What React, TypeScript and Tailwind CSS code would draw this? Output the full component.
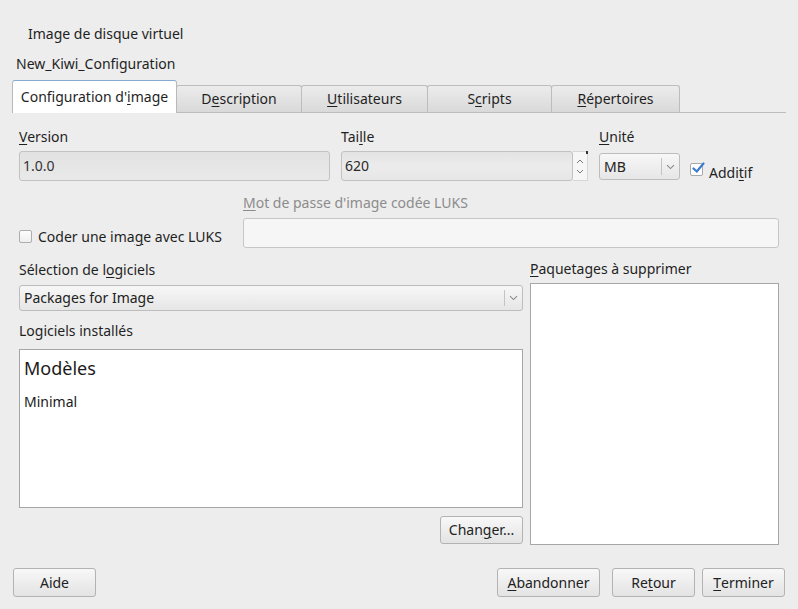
import type { ReactNode } from "react";

const font = { fontFamily: '"Noto Sans", "Open Sans", sans-serif' };

function U({ children }: { children: ReactNode }) {
  return <span className="underline underline-offset-2 decoration-1">{children}</span>;
}

function Button({ children, className = "" }: { children: ReactNode; className?: string }) {
  return (
    <button
      type="button"
      className={`flex items-center justify-center rounded-[3px] border border-[#b3b3b3] bg-linear-to-b from-[#f8f8f8] to-[#e3e3e3] text-[14px] text-[#222] ${className}`}
    >
      {children}
    </button>
  );
}

function Chevron() {
  return (
    <svg width="9" height="6" viewBox="0 0 9 6" className="text-[#8a8a8a]">
      <path d="M1 1.2 L4.5 4.6 L8 1.2" fill="none" stroke="currentColor" strokeWidth="1.1" />
    </svg>
  );
}

function Combo({ value, className = "" }: { value: string; className?: string }) {
  return (
    <div
      className={`flex items-center rounded-[3px] border border-[#bdbdbd] bg-linear-to-b from-[#f7f7f7] to-[#e6e6e6] ${className}`}
    >
      <span className="flex-1 pl-[4px] text-[#222]">{value}</span>
      <span className="h-[70%] w-px bg-[#c4c4c4]" />
      <span className="flex w-[17px] justify-center">
        <Chevron />
      </span>
    </div>
  );
}

function Tab({ children, width, active }: { children: ReactNode; width: string; active?: boolean }) {
  if (active) {
    return (
      <div
        className={`${width} relative z-10 -mb-px flex h-[33px] items-center justify-center rounded-t-[3px] border border-b-0 border-[#b9b9b9] border-t-[#86a9d2] bg-white`}
      >
        {children}
      </div>
    );
  }
  return (
    <div
      className={`${width} -ml-px flex h-[27px] items-center justify-center rounded-t-[3px] border border-b-0 border-[#bdbdbd] bg-linear-to-b from-[#ececec] to-[#d9d9d9]`}
    >
      {children}
    </div>
  );
}

export default function App() {
  return (
    <div style={font} className="flex h-[609px] w-[798px] flex-col overflow-hidden bg-[#ededed] text-[14px] leading-[18px] text-[#1f1f1f]">
      <div className="pl-[28px] pt-[25px]">Image de disque virtuel</div>
      <div className="mt-[12px] pl-[16px]">New_Kiwi_Configuration</div>

      {/* tabs */}
      <div className="mx-[12px] mt-[7px] flex h-[33px] items-end border-b border-[#bcbcbc]">
        <Tab width="w-[165px]" active>
          Configuration d'<U>i</U>mage
        </Tab>
        <Tab width="w-[126px]">
          D<U>e</U>scription
        </Tab>
        <Tab width="w-[127px]">
          <U>U</U>tilisateurs
        </Tab>
        <Tab width="w-[125px]">
          S<U>c</U>ripts
        </Tab>
        <Tab width="w-[129px]">
          <U>R</U>épertoires
        </Tab>
      </div>

      <div className="flex flex-col px-[19px]">
        {/* row 1 */}
        <div className="mt-[15px] flex gap-[11px]">
          <div className="flex w-[311px] flex-col">
            <span>
              <U>V</U>ersion
            </span>
            <div className="mt-[5px] flex h-[30px] items-center rounded-[3px] border border-[#c2c2c2] bg-linear-to-b from-[#e2e2e2] to-[#e9e9e9] pl-[3px] text-[#333]">
              1.0.0
            </div>
          </div>
          <div className="flex w-[247px] flex-col">
            <span>
              Tai<U>l</U>le
            </span>
            <div className="mt-[5px] flex h-[30px]">
              <div className="flex flex-1 items-center rounded-[3px] border border-[#c2c2c2] bg-linear-to-b from-[#e3e3e3] via-[#ececec] to-[#e6e6e6] pl-[3px] text-[#2a2a2a]">
                620
              </div>
              <div className="relative flex w-[15px] flex-col items-center justify-center gap-[5px] border border-l-0 border-[#d6d6d6] bg-[#f6f6f6]">
                <span className="absolute right-[-1px] top-[-1px] h-[3px] w-[2px] bg-[#333]" />
                <svg width="8" height="5" viewBox="0 0 8 5">
                  <path d="M1 4 L4 1 L7 4" fill="none" stroke="#777" strokeWidth="1" />
                </svg>
                <svg width="8" height="5" viewBox="0 0 8 5">
                  <path d="M1 1 L4 4 L7 1" fill="none" stroke="#777" strokeWidth="1" />
                </svg>
              </div>
            </div>
          </div>
          <div className="flex w-[81px] flex-col">
            <span>
              <U>U</U>nité
            </span>
            <Combo value="MB" className="mt-[7px] h-[27px]" />
          </div>
          <div className="ml-[-1px] mt-[34px] flex items-start gap-[6px]">
            <span className="relative mt-[1px] h-[13px] w-[13px] rounded-[2px] border border-[#a8a8a8] bg-white">
              <svg width="13" height="12" viewBox="0 0 13 12" className="absolute left-[1px] top-[-2px]">
                <path d="M1.5 6.5 L4.8 9.5 L11.5 1.5" fill="none" stroke="#3a7bd0" strokeWidth="2.2" strokeLinecap="round" />
              </svg>
            </span>
            <span className="mt-[2px]">
              Addi<U>t</U>if
            </span>
          </div>
        </div>

        {/* row 2 */}
        <div className="mt-[12px] flex">
          <div className="flex w-[224px] items-end pb-[2px]">
            <span className="mb-[3px] h-[13px] w-[13px] rounded-[2px] border border-[#adadad] bg-linear-to-b from-[#fdfdfd] to-[#efefef]" />
            <span className="ml-[6px]">
              Coder une ima<U>g</U>e avec LUKS
            </span>
          </div>
          <div className="flex flex-1 flex-col">
            <span className="text-[#8c8c8c]">
              <U>M</U>ot de passe d'image codée LUKS
            </span>
            <div className="mt-[6px] h-[30px] rounded-[3px] border border-[#c6c6c6] bg-[#f6f6f6]" />
          </div>
        </div>

        {/* row 3 */}
        <div className="mt-[12px] flex gap-[7px]">
          <div className="flex w-[504px] flex-col">
            <span className="mt-[1px]">
              Sélection de l<U>o</U>giciels
            </span>
            <Combo value="Packages for Image" className="mt-[6px] h-[26px]" />
            <span className="mt-[11px]">Logiciels installés</span>
            <div className="mt-[9px] flex h-[159px] flex-col border border-[#a6a6a6] bg-white pl-[4px]">
              <span className="mt-[7px] text-[18px] leading-[22px] text-[#1a1a1a]">Modèles</span>
              <span className="mt-[14px] text-[#1a1a1a]">Minimal</span>
            </div>
            <Button className="mt-[8px] h-[28px] w-[83px] self-end">
              Chan<U>g</U>er...
            </Button>
          </div>
          <div className="flex flex-1 flex-col">
            <span>
              <U>P</U>aquetages à supprimer
            </span>
            <div className="mt-[5px] h-[262px] border border-[#a6a6a6] bg-white" />
          </div>
        </div>
      </div>

      {/* footer */}
      <div className="mt-[23px] flex px-[13px]">
        <Button className="h-[29px] w-[83px]">Aide</Button>
        <div className="flex-1" />
        <Button className="h-[29px] w-[103px]">
          <U>A</U>bandonner
        </Button>
        <Button className="ml-[12px] h-[29px] w-[83px]">
          Re<U>t</U>our
        </Button>
        <Button className="ml-[7px] h-[29px] w-[83px]">
          <U>T</U>erminer
        </Button>
      </div>
    </div>
  );
}
